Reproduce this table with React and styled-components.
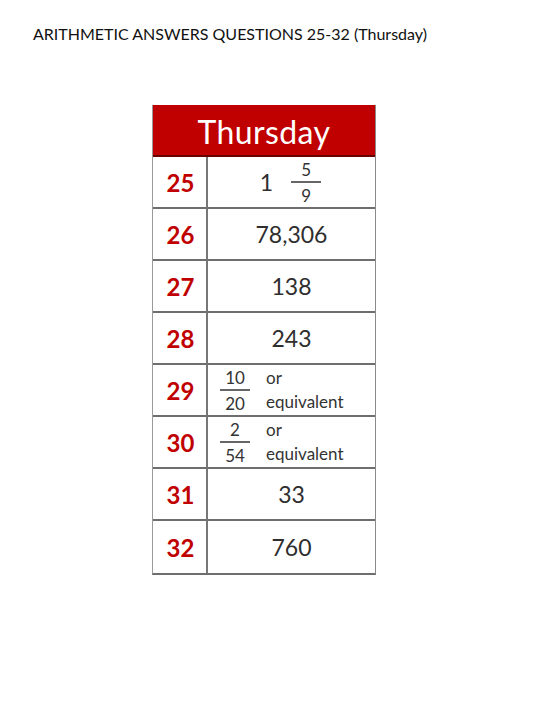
import styled, { createGlobalStyle } from "styled-components";

const Global = createGlobalStyle`
  html, body {
    margin: 0;
    padding: 0;
    background: #ffffff;
  }
  body {
    width: 540px;
    height: 720px;
    overflow: hidden;
    font-family: "Lato", "Open Sans", sans-serif;
  }
`;

const Page = styled.div`
  padding: 24px 0 0 33px;
  display: flex;
  flex-direction: column;
`;

const Title = styled.h1`
  margin: 0;
  font-size: 16px;
  font-weight: 400;
  color: #111;
  line-height: 20px;
  font-family: "Lato", "Open Sans", sans-serif;
`;

const Table = styled.div`
  margin: 61px 0 0 119px;
  width: 224px;
  box-sizing: border-box;
  display: grid;
  grid-template-columns: 55px 1fr;
  border-left: 1.5px solid #9a9a9a;
  border-right: 1.5px solid #8a8a8a;
  border-bottom: 2px solid #6e6e6e;
`;

const Header = styled.div`
  grid-column: 1 / -1;
  height: 52px;
  background: #c00000;
  color: #fff;
  font-size: 32px;
  font-weight: 400;
  display: flex;
  align-items: center;
  justify-content: center;
  border-bottom: 2px solid #6a0000;
  box-sizing: border-box;
  letter-spacing: 0.4px;
  padding-top: 2px;
`;

const Num = styled.div`
  height: 52px;
  box-sizing: border-box;
  border-bottom: ${(p) => (p.$last ? "none" : "2px solid #6e6e6e")};
  border-right: 2px solid #777;
  display: flex;
  align-items: center;
  justify-content: center;
  color: #c00000;
  font-weight: 700;
  font-size: 24px;
  padding-left: 2px;
`;

const Value = styled.div`
  height: 52px;
  box-sizing: border-box;
  border-bottom: ${(p) => (p.$last ? "none" : "2px solid #6e6e6e")};
  display: flex;
  align-items: center;
  justify-content: ${(p) => (p.$left ? "flex-start" : "center")};
  padding-left: ${(p) => (p.$left ? "12px" : "0")};
  color: #2e2e2e;
  font-size: 23px;
`;

const Mixed = styled.div`
  display: flex;
  align-items: center;
  gap: 18px;
  margin-right: 2px;
`;

const Fraction = styled.div`
  display: flex;
  flex-direction: column;
  align-items: center;
  font-size: 17px;
  line-height: 1;
  color: #333;
  width: 30px;
`;

const Bar = styled.div`
  align-self: stretch;
  height: 2px;
  background: #666;
  margin: 3px 0 4px;
`;

const OrText = styled.div`
  display: flex;
  flex-direction: column;
  font-size: 17px;
  line-height: 24px;
  color: #333;
  margin-left: 16px;
`;

const rows = [
  { n: 25, kind: "mixed" },
  { n: 26, v: "78,306" },
  { n: 27, v: "138" },
  { n: 28, v: "243" },
  { n: 29, kind: "frac", top: "10", bottom: "20" },
  { n: 30, kind: "frac", top: "2", bottom: "54" },
  { n: 31, v: "33" },
  { n: 32, v: "760" },
];

export default function App() {
  return (
    <>
      <Global />
      <Page>
        <Title>ARITHMETIC ANSWERS QUESTIONS 25-32 (Thursday)</Title>
        <Table>
          <Header>Thursday</Header>
          {rows.map((r, i) => {
            const last = i === rows.length - 1;
            let content;
            if (r.kind === "mixed") {
              content = (
                <Mixed>
                  <span>1</span>
                  <Fraction>
                    <span>5</span>
                    <Bar />
                    <span>9</span>
                  </Fraction>
                </Mixed>
              );
            } else if (r.kind === "frac") {
              content = (
                <>
                  <Fraction>
                    <span>{r.top}</span>
                    <Bar />
                    <span>{r.bottom}</span>
                  </Fraction>
                  <OrText>
                    <span>or</span>
                    <span>equivalent</span>
                  </OrText>
                </>
              );
            } else {
              content = r.v;
            }
            return [
              <Num key={`n${r.n}`} $last={last}>
                {r.n}
              </Num>,
              <Value key={`v${r.n}`} $last={last} $left={r.kind === "frac"}>
                {content}
              </Value>,
            ];
          })}
        </Table>
      </Page>
    </>
  );
}
